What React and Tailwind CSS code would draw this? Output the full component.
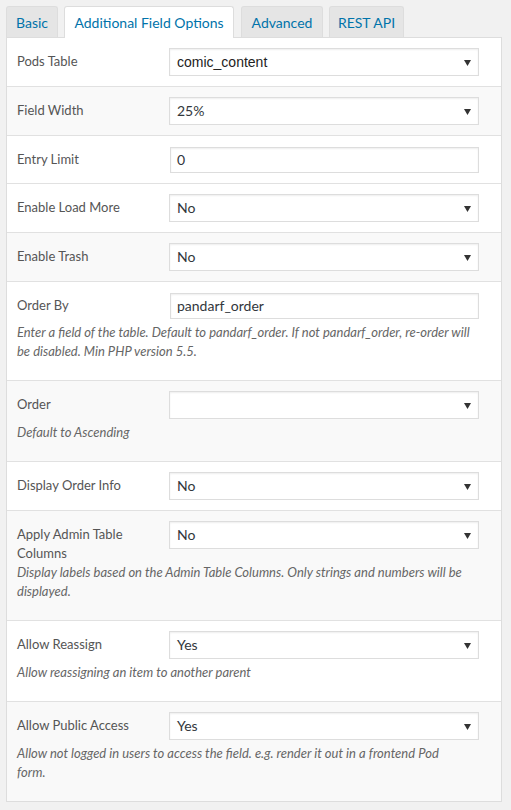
import React from "react";

const font = { fontFamily: "Lato, 'Noto Sans', sans-serif" };

function Arrow() {
  return (
    <svg className="absolute right-[7px] top-[11px]" width="7" height="6" viewBox="0 0 7 6">
      <path d="M0 0 H7 L3.5 6 Z" fill="#333" />
    </svg>
  );
}

function Select({ value, arial }) {
  return (
    <div className="relative w-[310px] h-[28px] border border-[#dddddd] bg-white shadow-[inset_0_1px_2px_rgba(0,0,0,0.07)] shrink-0">
      <span
        className={
          "absolute left-[7px] top-0 leading-[26px] text-[14px] " +
          (arial ? "font-['Liberation_Sans',Arial,sans-serif] text-[#222]" : "text-[#32373c]")
        }
      >
        {value}
      </span>
      <Arrow />
    </div>
  );
}

function Input({ value }) {
  return (
    <div className="relative ml-[1px] mt-[1px] w-[309px] h-[26px] border border-[#dddddd] bg-white shadow-[inset_0_1px_2px_rgba(0,0,0,0.07)] shrink-0">
      <span className="absolute left-[6px] top-0 leading-[24px] text-[14px] text-[#32373c]">{value}</span>
    </div>
  );
}

function Row({ label, control, desc, gray, last }) {
  return (
    <div
      className={
        "px-[10px] pt-[10px] " +
        (desc ? "pb-[19px] " : "pb-[10px] ") +
        (gray ? "bg-[#f9f9f9] " : "bg-white ") +
        (last ? "" : "border-b border-[#e1e1e1]")
      }
    >
      <div className="flex items-start">
        <div className="w-[152px] shrink-0 pt-[4px] pr-[8px] text-[13px] leading-[19px] text-[#555]">{label}</div>
        <div className={desc ? "pb-[4px]" : ""}>{control}</div>
      </div>
      {desc && <div className="text-[13px] leading-[19px] italic text-[#666] pr-[2px]">{desc}</div>}
    </div>
  );
}

export default function App() {
  const tabs = ["Basic", "Additional Field Options", "Advanced", "REST API"];
  const widths = ["w-[52px]", "w-[170px]", "w-[82px]", "w-[75px]"];
  return (
    <div className="min-h-[810px] bg-[#f1f1f1] pt-[6px] pb-[9px] pl-[6px] pr-[9px]" style={font}>
      <div className="flex gap-[6px] items-end relative z-10">
        {tabs.map((t, i) => (
          <div
            key={t}
            className={
              "h-[31px] flex items-center justify-center rounded-t-[3px] border border-b-0 text-[14px] text-[#0073aa] " +
              widths[i] +
              (i === 1
                ? " bg-white border-[#dddddd] h-[32px] -mb-[1px]"
                : " bg-[#e5e5e5] border-[#dddddd]") +
              (i === 2 ? " ml-[1px]" : "")
            }
          >
            {t}
          </div>
        ))}
      </div>
      <div className="border border-[#dddddd] bg-white">
        <Row label="Pods Table" control={<Select value="comic_content" arial />} />
        <Row label="Field Width" control={<Select value="25%" />} gray />
        <Row label="Entry Limit" control={<Input value="0" />} />
        <Row label="Enable Load More" control={<Select value="No" />} />
        <Row label="Enable Trash" control={<Select value="No" />} gray />
        <Row
          label="Order By"
          control={<Input value="pandarf_order" />}
          desc={
            <>
              Enter a field of the table. Default to pandarf_order. If not pandarf_order, re-order will
              <br />
              be disabled. Min PHP version 5.5.
            </>
          }
        />
        <Row label="Order" control={<Select value="" />} desc="Default to Ascending" gray />
        <Row label="Display Order Info" control={<Select value="No" />} />
        <Row
          label="Apply Admin Table Columns"
          control={<Select value="No" />}
          desc={
            <>
              Display labels based on the Admin Table Columns. Only strings and numbers will be
              <br />
              displayed.
            </>
          }
          gray
        />
        <Row label="Allow Reassign" control={<Select value="Yes" />} desc="Allow reassigning an item to another parent" />
        <Row
          label="Allow Public Access"
          control={<Select value="Yes" />}
          desc={
            <>
              Allow not logged in users to access the field. e.g. render it out in a frontend Pod
              <br />
              form.
            </>
          }
          gray
          last
        />
      </div>
    </div>
  );
}
